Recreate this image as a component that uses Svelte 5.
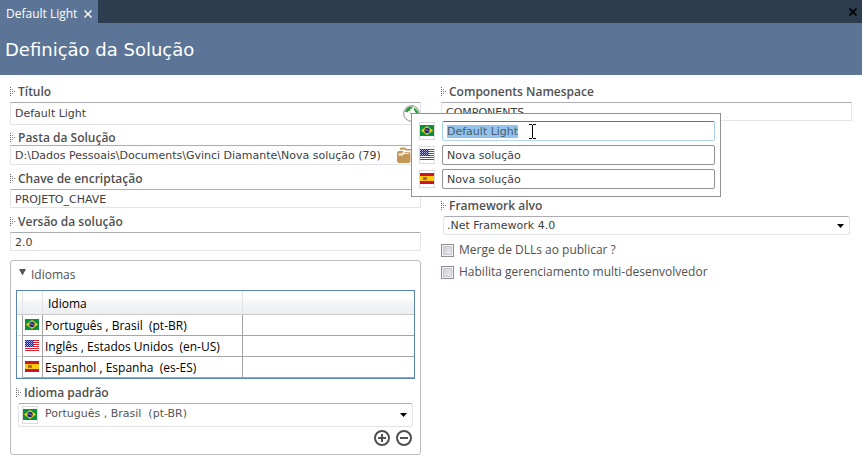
<script>
  import { onMount } from 'svelte';

  const languages = [
    { flag: 'br', name: 'Português , Brasil \u00a0(pt-BR)', title: 'Default Light' },
    { flag: 'us', name: 'Inglês , Estados Unidos \u00a0(en-US)', title: 'Nova solução' },
    { flag: 'es', name: 'Espanhol , Espanha \u00a0(es-ES)', title: 'Nova solução' }
  ];

  let popup;

  onMount(() => {
    const first = popup.querySelector('input');
    first.focus({ preventScroll: true });
    first.select();
  });
</script>

{#snippet flagIcon(code)}
  <svg class="flag" viewBox="0 0 14 11" aria-hidden="true">
    {#if code === 'br'}
      <rect width="14" height="11" fill="#0a8f3c" />
      <path d="M7 1 13 5.5 7 10 1 5.5z" fill="#f0d21c" />
      <circle cx="7" cy="5.5" r="2.7" fill="#232a6b" />
      <path d="M4.7 4.8Q7.5 4.6 9.3 6.6" stroke="#a9b3cf" stroke-width=".7" fill="none" />
    {:else if code === 'us'}
      <rect width="14" height="11" fill="#fff" />
      <path d="M0 .5H14M0 2.5H14M0 4.5H14M0 6.5H14M0 8.5H14M0 10.5H14" stroke="#d8202c" />
      <rect width="9" height="7" fill="#20209a" />
      <path d="M0 1.5H9M0 3.5H9M0 5.5H9" stroke="#b9bce6" stroke-dasharray="1 1" />
      <path d="M1 .5H9M1 2.5H9M1 4.5H9M1 6.5H9" stroke="#7478c8" stroke-dasharray="1 1" />
    {:else}
      <rect width="14" height="11" fill="#cc1424" />
      <rect y="3" width="14" height="5" fill="#fbc70f" />
      <rect x="3" y="4" width="4" height="3" fill="#b56a35" />
      <rect x="4" y="5" width="1" height="1" fill="#7f4a4a" />
    {/if}
  </svg>
{/snippet}

{#snippet grip()}
  <svg class="grip" viewBox="0 0 5 9" aria-hidden="true">
    <path d="M.5 0V9" stroke="#666" stroke-dasharray="1 1" />
    <path d="M2.5 2V8" stroke="#888" stroke-dasharray="1 1" />
    <path d="M4.5 4V5" stroke="#777" />
  </svg>
{/snippet}

{#snippet arrow()}
  <svg class="arrow" viewBox="0 0 7 4" aria-hidden="true"><path d="M0 0H7L3.5 4z" /></svg>
{/snippet}

<div class="app">
  <div class="tabs">
    <div class="tab">
      <span>Default Light</span>
      <button aria-label="Fechar aba">
        <svg width="8" height="8" viewBox="0 0 8 8"><path d="M.5.5 7.5 7.5M7.5.5.5 7.5" stroke="#fff" stroke-width="1.4" /></svg>
      </button>
    </div>
    <button class="close" aria-label="Fechar">
      <svg width="8" height="8" viewBox="0 0 8 8"><path d="M.5.5 7.5 7.5M7.5.5.5 7.5" stroke="#000" stroke-width="1.6" /></svg>
    </button>
  </div>

  <header><h1>Definição da Solução</h1></header>

  <main>
    <section class="column">
      <div class="field">
        <label for="title">{@render grip()}Título</label>
        <div class="box tall">
          <input id="title" value="Default Light" />
          <button class="globe" aria-label="Traduzir">
            <svg width="17" height="17" viewBox="0 0 17 17">
              <circle cx="8.5" cy="8.5" r="7.8" fill="#fff" stroke="#8b8b8b" />
              <path d="M1.8 7Q3 3 6.500 1.800L10 1.600 9 3.500 7 4 7.500 5.500 5.500 6 4.500 7.500 3 6.800z" fill="#2f9a3a" />
              <path d="M11 2.500Q14 4 15.300 7L14.500 9 12.500 7.500 11 5zM7 7.500 8.500 8 9.500 10 8 9.500z" fill="#2f9a3a" />
            </svg>
          </button>
          <div class="popup" bind:this={popup}>
            {#each languages as lang}
              <div class="translation">
                <span class="frame">{@render flagIcon(lang.flag)}</span>
                <input value={lang.title} aria-label={lang.name} />
              </div>
            {/each}
            <svg class="ibeam" viewBox="0 0 7 15" aria-hidden="true">
              <path d="M0 .5H3M4 .5H7M3.5 1V14M0 14.5H3M4 14.5H7" stroke="#000" fill="none" />
            </svg>
          </div>
        </div>
      </div>

      <div class="field compact">
        <label for="folder">{@render grip()}Pasta da Solução</label>
        <div class="box">
          <input id="folder" value="D:\Dados Pessoais\Documents\Gvinci Diamante\Nova solução (79)" />
          <button class="folder" aria-label="Escolher pasta">
            <svg width="18" height="16" viewBox="0 0 18 16" fill="#c39557">
              <path d="M3 3V2Q3 .5 4.500 .5H8L9.500 2H16Q17.500 2 17.500 3.500V13H14V3.500H8.500L7.500 2.500H4.500V3z" />
              <path d="M0 6Q0 4 2 4H6.500L5 6.500H1.500V7.500H5.500L8 5H12Q13.500 5 13.500 6.500V14Q13.500 16 11.500 16H2Q0 16 0 14z" />
              <path d="M1.500 8H5.800L7.800 6.300H12" stroke="#fff" fill="none" />
            </svg>
          </button>
        </div>
      </div>

      <div class="field">
        <label for="key">{@render grip()}Chave de encriptação</label>
        <div class="box"><input id="key" value="PROJETO_CHAVE" /></div>
      </div>

      <div class="field">
        <label for="version">{@render grip()}Versão da solução</label>
        <div class="box"><input id="version" value="2.0" /></div>
      </div>

      <details class="panel" open>
        <summary>
          <svg width="7" height="7" viewBox="0 0 7 7" aria-hidden="true"><path d="M0 0H7L3.500 6.500z" fill="#555" /></svg>
          Idiomas
        </summary>
        <table>
          <thead>
            <tr><th class="handle"></th><th class="pic"></th><th class="name">Idioma</th><th></th></tr>
          </thead>
          <tbody>
            {#each languages as lang}
              <tr>
                <td class="handle"></td>
                <td class="pic">{@render flagIcon(lang.flag)}</td>
                <td class="name">{lang.name}</td>
                <td></td>
              </tr>
            {/each}
          </tbody>
        </table>
        <div class="default">
          <label for="default-language">{@render grip()}Idioma padrão</label>
          <div class="select large">
            <span class="frame">{@render flagIcon('br')}</span>
            <select id="default-language">
              {#each languages as lang}<option>{lang.name}</option>{/each}
            </select>
            {@render arrow()}
          </div>
          <div class="actions">
            <button aria-label="Adicionar idioma">
              <svg width="16" height="16" viewBox="0 0 16 16"><circle cx="8" cy="8" r="7" /><path d="M4 8H12M8 4V12" /></svg>
            </button>
            <button aria-label="Remover idioma">
              <svg width="16" height="16" viewBox="0 0 16 16"><circle cx="8" cy="8" r="7" /><path d="M4 8H12" /></svg>
            </button>
          </div>
        </div>
      </details>
    </section>

    <section class="column">
      <div class="field">
        <label for="namespace">{@render grip()}Components Namespace</label>
        <div class="box"><input id="namespace" value="COMPONENTS" /></div>
      </div>
      <div class="field framework">
        <label for="framework">{@render grip()}Framework alvo</label>
        <div class="select">
          <select id="framework"><option>.Net Framework 4.0</option></select>
          {@render arrow()}
        </div>
      </div>
      <div class="checks">
        <label><input type="checkbox" />Merge de DLLs ao publicar ?</label>
        <label><input type="checkbox" />Habilita gerenciamento multi-desenvolvedor</label>
      </div>
    </section>
  </main>
</div>

<style>
  :global(body) {
    margin: 0;
    background: #fff;
  }
  .app {
    font: 12px/16px "Open Sans", "Noto Sans", sans-serif;
    color: #505050;
  }
  .app * {
    box-sizing: border-box;
  }
  button {
    display: flex;
    padding: 0;
    border: 0;
    background: none;
  }
  .tabs {
    display: flex;
    justify-content: space-between;
    align-items: center;
    height: 23px;
    padding-right: 5px;
    background: #2d3d4f;
  }
  .tab {
    display: flex;
    align-items: center;
    gap: 7px;
    height: 23px;
    padding: 4px 6px 0;
    background: #5c7596;
    color: #fff;
  }
  header {
    padding: 14px 5px 13px;
    background: #5c7596;
  }
  h1 {
    margin: 0;
    font: 18px/25px "DejaVu Sans", sans-serif;
    color: #fff;
  }
  main {
    display: grid;
    grid-template-columns: minmax(0, 1fr) minmax(0, 1fr);
    gap: 20px;
    padding: 7px 10px 0;
  }
  .column {
    display: flex;
    flex-direction: column;
  }
  .field {
    margin-bottom: 4px;
  }
  .field > label,
  .default > label {
    display: flex;
    align-items: center;
    gap: 3px;
    height: 20px;
    font-weight: 600;
  }
  .compact > label {
    height: 16px;
    padding-top: 2px;
  }
  .grip {
    width: 5px;
    height: 9px;
    margin-bottom: 2px;
    shape-rendering: crispEdges;
  }
  .box {
    position: relative;
    display: flex;
    align-items: center;
    height: 19px;
    border: 1px solid #e1e4ec;
    border-top-color: #acacb4;
    border-radius: 1px;
  }
  .compact .box {
    height: 20px;
  }
  .tall {
    height: 23px;
  }
  input:not([type]),
  select {
    flex: 1;
    min-width: 0;
    height: 100%;
    margin: 0;
    padding: 1px 4px 0;
    border: 0;
    outline: 0;
    background: transparent;
    color: #404040;
    font: 11px/16px "DejaVu Sans", sans-serif;
  }
  .tall > input:not([type]) {
    padding-top: 0;
  }
  .folder {
    margin-right: 5px;
  }
  .popup {
    position: absolute;
    z-index: 2;
    top: 10px;
    left: calc(100% - 9px);
    display: flex;
    flex-direction: column;
    gap: 4px;
    width: 310px;
    padding: 7px 5px 7px 7px;
    border: 1px solid #929292;
    background: #fff;
  }
  .translation {
    display: flex;
    align-items: center;
    gap: 7px;
  }
  .translation input:not([type]) {
    height: 20px;
    padding: 0 4px;
    border: 1px solid #929292;
    border-radius: 2px;
  }
  .translation input:not([type]):focus {
    border-color: #3d7bad #a9cfe9 #b5d5ea;
    color: #4c5d70;
  }
  .translation input::selection {
    background: rgba(145, 194, 236, 0.99);
    color: #4c5d70;
  }
  .ibeam {
    position: absolute;
    top: 10px;
    left: 117px;
    width: 7px;
    height: 15px;
    shape-rendering: crispEdges;
  }
  .frame {
    display: flex;
    align-items: center;
    justify-content: center;
    flex: none;
    width: 16px;
    height: 18px;
    padding-bottom: 1px;
    border: 1px solid #dcdcdc;
  }
  .flag {
    display: block;
    flex: none;
    width: 14px;
    height: 11px;
  }
  .panel {
    margin-top: 5px;
    padding: 4px 5px 8px;
    border: 1px solid #bcbcbc;
    border-radius: 3px;
  }
  summary {
    display: flex;
    align-items: center;
    gap: 5px;
    height: 25px;
    padding: 0 3px 6px;
    list-style: none;
  }
  summary svg {
    margin-bottom: 4px;
  }
  table {
    width: 100%;
    table-layout: fixed;
    border: 1px solid #5a86ad;
    border-collapse: separate;
    border-spacing: 0;
    color: #000;
  }
  th {
    height: 24px;
    padding: 2px 0 0;
    border-right: 1px solid #e0e2e5;
    border-bottom: 1px solid #c8cacd;
    background: linear-gradient(#fff 35%, #f6f7f8 45%, #eceef0);
    font-weight: 400;
    text-align: left;
  }
  td {
    height: 21px;
    padding: 2px 0 0;
    border-right: 1px solid #a5a5a5;
    border-bottom: 1px solid #a5a5a5;
    line-height: 14px;
    white-space: nowrap;
  }
  th:last-child,
  td:last-child {
    border-right: 0;
  }
  .handle {
    width: 6px;
  }
  td.handle {
    border-bottom-color: #e0e2e5;
  }
  .pic {
    width: 20px;
  }
  td.pic {
    padding: 0 0 2px 2px;
  }
  .name {
    width: 200px;
  }
  td.name {
    padding-left: 2px;
  }
  th.name {
    padding-left: 5px;
  }
  .default {
    padding-top: 4px;
  }
  .select {
    position: relative;
    display: flex;
    align-items: center;
    height: 19px;
    margin: 0 2px;
    border: 1px solid #e1e4ec;
    border-top-color: #acacb4;
    border-radius: 3px;
  }
  .select.large {
    height: 24px;
    padding-left: 3px;
  }
  .large .frame {
    margin-right: 2px;
  }
  select {
    appearance: none;
    padding: 1px 3px 0;
  }
  .large select {
    padding: 0 5px 3px;
    color: #555;
  }
  .arrow {
    position: absolute;
    right: 5px;
    width: 7px;
    height: 4px;
    pointer-events: none;
  }
  .actions {
    display: flex;
    justify-content: flex-end;
    gap: 6px;
    padding: 3px 3px 0;
  }
  .actions svg {
    fill: none;
    stroke: #505050;
    stroke-width: 2;
  }
  .framework {
    margin-top: 71px;
  }
  .checks label {
    display: flex;
    align-items: center;
    gap: 5px;
    height: 22px;
  }
  .checks input {
    appearance: none;
    width: 13px;
    height: 13px;
    margin: 0;
    border: 1px solid #8e8f8f;
    background: linear-gradient(135deg, #c4c8ce, #f2f2f2);
    box-shadow: inset 0 0 0 1px #f4f4f4, inset 0 0 0 2px #c5c8cc;
  }
</style>
